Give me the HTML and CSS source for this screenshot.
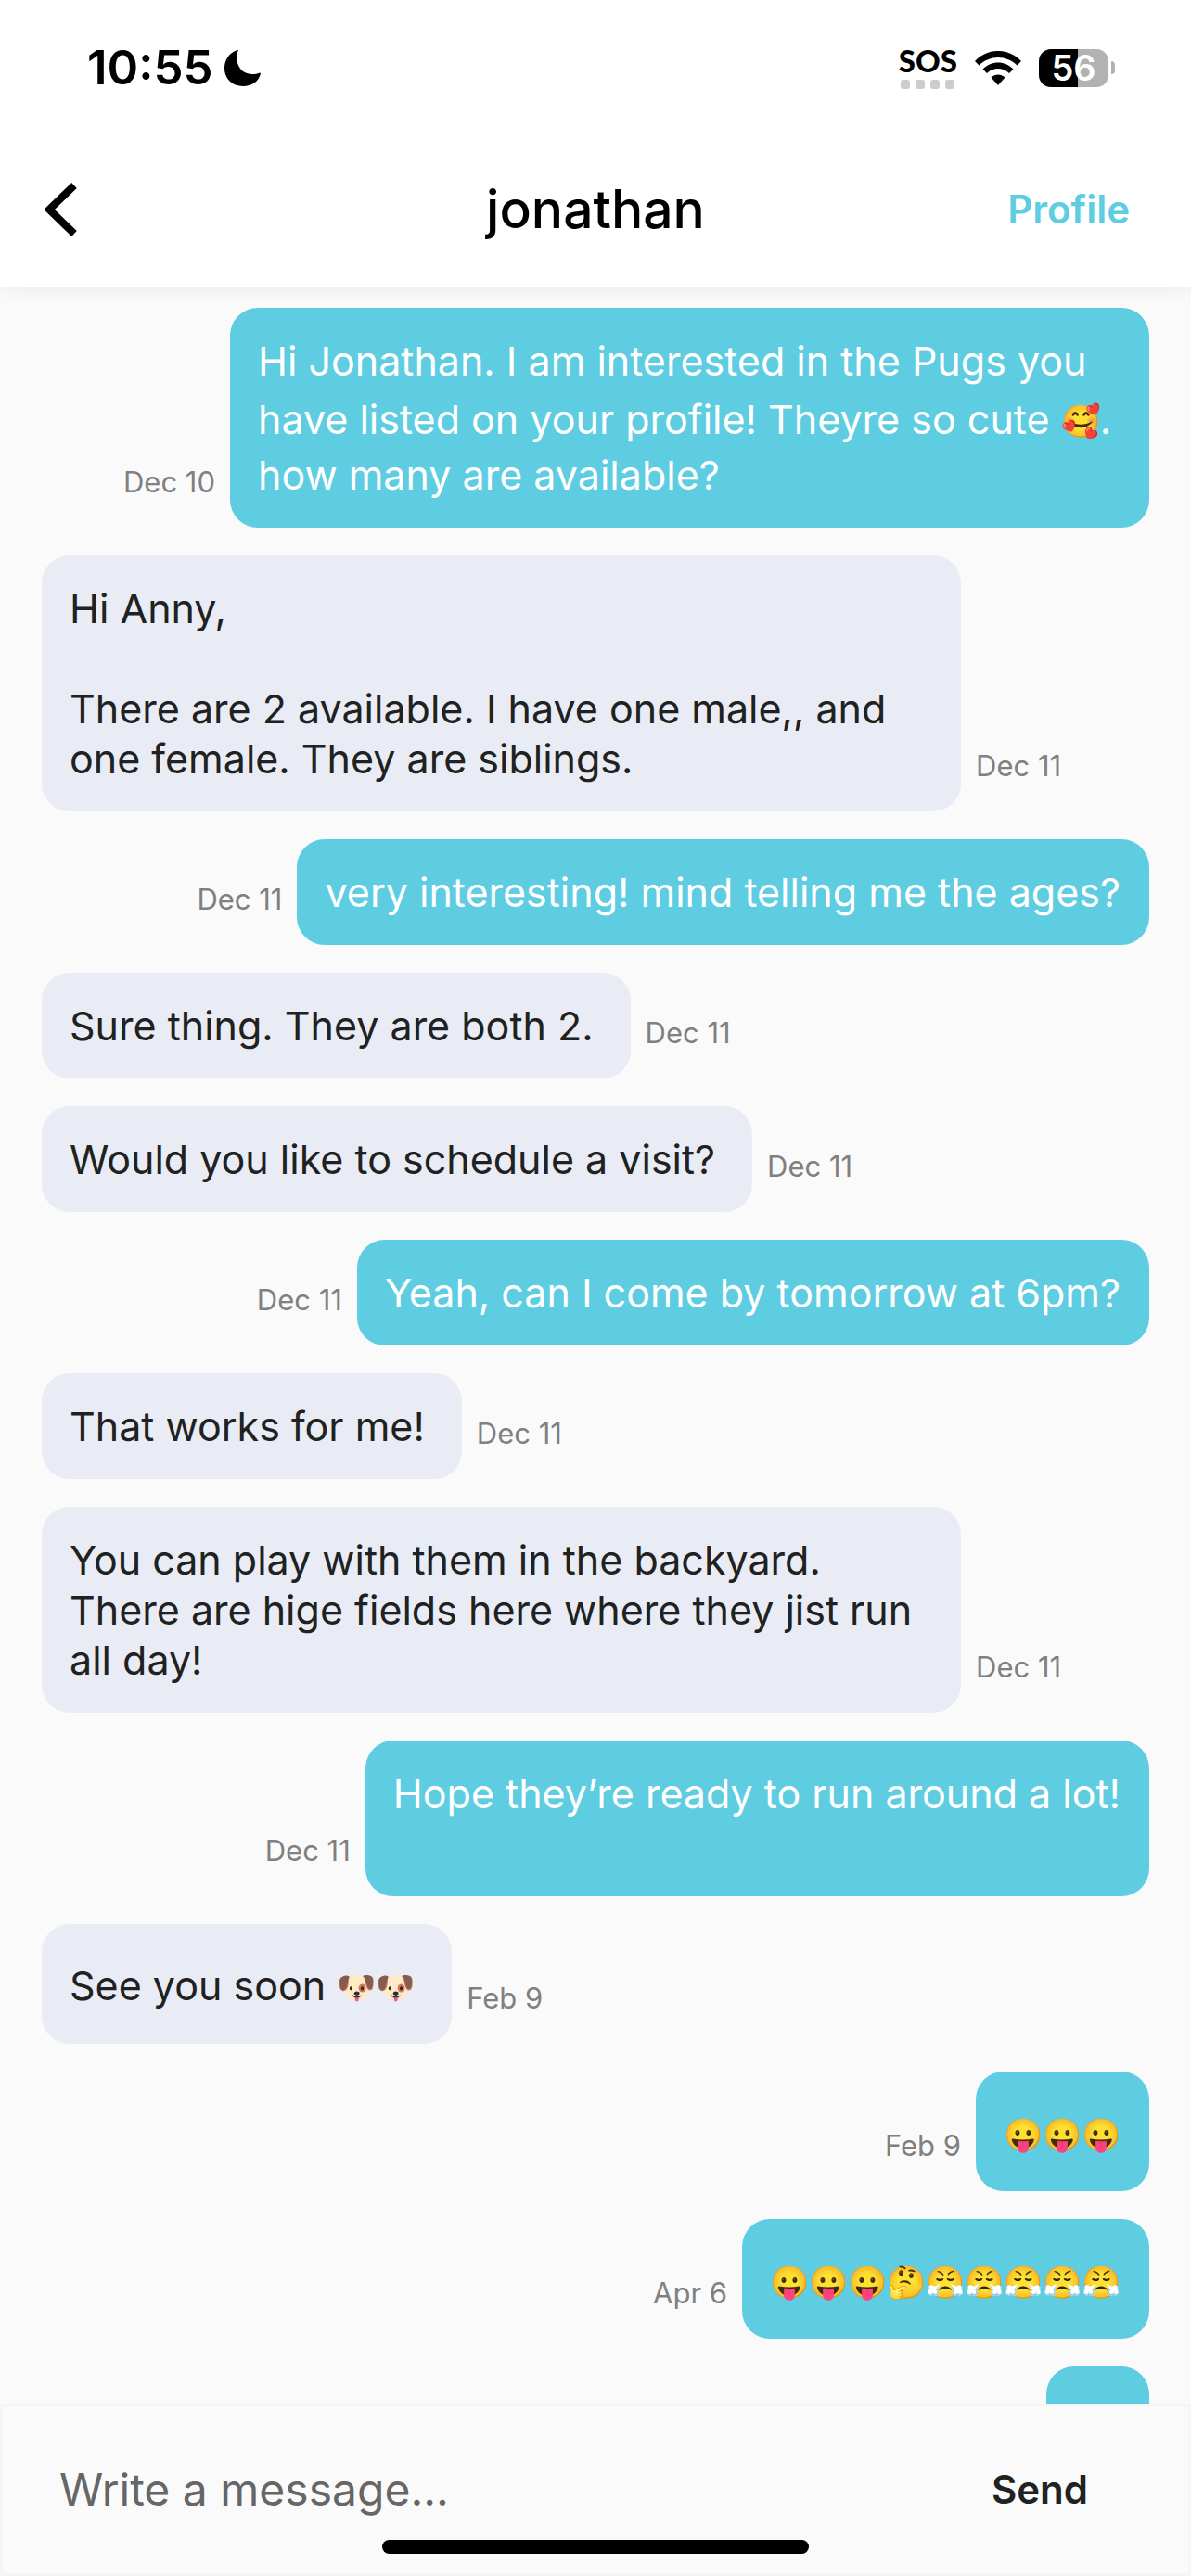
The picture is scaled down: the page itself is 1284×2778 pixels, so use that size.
FILE: index.html
```html
<!DOCTYPE html>
<html lang="en">
<head>
<meta charset="utf-8">
<meta name="viewport" content="width=device-width, initial-scale=1">
<title>jonathan</title>
<link rel="stylesheet" href="styles.css">
</head>
<body>
<div class="screen">
  <header class="top">
    <div class="status">
      <div class="status-left">
        <span class="clock">10:55</span>
        <svg class="moon" viewBox="0 0 39 39" aria-hidden="true"><path d="M15 0C13 4 12.500 8 13.500 12C15.500 21 22 26 30 26C33 26 35.500 25.500 38 24.500C38.800 24.500 39 25 38.800 26C36.500 34 29.500 39 20 39C8.500 39 0 31 0 19.500C0 10.500 5 3 14 0C14.700 -.2 15.100 -.2 15 0Z"/></svg>
      </div>
      <div class="status-right">
        <div class="carrier">
          <span class="sos">SOS</span>
          <span class="dots"><i></i><i></i><i></i><i></i></span>
        </div>
        <svg class="wifi" viewBox="0 0 50 37" aria-hidden="true">
          <path d="M0 11C14 -3.700 36 -3.700 50 11L45.500 15.500C34 4 16 4 4.500 15.500Z"/>
          <path d="M8.500 19.500C18 10 32 10 41.500 19.500L37 24C30 17.300 20 17.300 13 24Z"/>
          <path d="M17.500 28.500C22 24.500 28 24.500 32.500 28.500L25 37Z"/>
        </svg>
        <div class="battery"><span class="level">56</span><span class="nub"></span></div>
      </div>
    </div>
    <nav class="nav">
      <button class="back" type="button" aria-label="Back"><svg viewBox="0 0 34 58" aria-hidden="true"><path d="M31 3L4 29L31 55"/></svg></button>
      <h1 class="name">jonathan</h1>
      <a class="profile" href="#profile">Profile</a>
    </nav>
  </header>

  <main class="thread">
    <div class="row sent"><p class="bubble">Hi Jonathan. I am interested in the Pugs you have listed on your profile! Theyre so cute <span class="emoji">🥰</span>. how many are available?</p><time>Dec 10</time></div>
    <div class="row"><p class="bubble">Hi Anny,<br><br>There are 2 available. I have one male,, and one female. They are siblings.</p><time>Dec 11</time></div>
    <div class="row sent"><p class="bubble">very interesting! mind telling me the ages?</p><time>Dec 11</time></div>
    <div class="row"><p class="bubble">Sure thing. They are both 2.</p><time>Dec 11</time></div>
    <div class="row"><p class="bubble">Would you like to schedule a visit?</p><time>Dec 11</time></div>
    <div class="row sent"><p class="bubble">Yeah, can I come by tomorrow at 6pm?</p><time>Dec 11</time></div>
    <div class="row"><p class="bubble">That works for me!</p><time>Dec 11</time></div>
    <div class="row"><p class="bubble">You can play with them in the backyard. There are hige fields here where they jist run all day!</p><time>Dec 11</time></div>
    <div class="row sent"><p class="bubble">Hope they’re ready to run around a lot!<br><br></p><time>Dec 11</time></div>
    <div class="row"><p class="bubble">See you soon <span class="emoji">🐶🐶</span></p><time>Feb 9</time></div>
    <div class="row sent"><p class="bubble"><span class="emoji">😛😛😛</span></p><time>Feb 9</time></div>
    <div class="row sent"><p class="bubble"><span class="emoji">😛😛😛🤔😤😤😤😤😤</span></p><time>Apr 6</time></div>
    <div class="row sent"><p class="bubble"></p></div>
  </main>

  <form class="composer">
    <input class="field" type="text" placeholder="Write a message..." aria-label="Write a message">
    <button class="send" type="button">Send</button>
    <span class="home"></span>
  </form>
</div>
</body>
</html>
```
FILE: styles.css
```css
* { box-sizing: border-box; }

body {
  margin: 0;
  background: #fafafa;
  color: #202121;
  font-family: Inter, "Noto Sans", sans-serif;
}

.screen {
  display: flex;
  flex-direction: column;
  height: 100vh;
}

/* Header */
.top {
  position: relative;
  flex: none;
  background: #fff;
  color: #000;
  box-shadow: 0 0 24px rgba(0, 0, 0, 0.08);
}

.status {
  display: flex;
  justify-content: space-between;
  align-items: center;
  height: 144px;
  padding: 2px 82px 0 94px;
}

.status-left,
.status-right { display: flex; align-items: center; }

.status-left { gap: 12px; }
.status-right { gap: 19px; }

.clock { font-size: 51px; font-weight: 600; line-height: 60px; }
.moon { width: 39px; height: 39px; }

.carrier {
  display: flex;
  flex-direction: column;
  align-items: center;
  gap: 6px;
}

.sos { font: 900 33px/30px Lato, sans-serif; }

.dots { display: flex; gap: 6px; }
.dots i { width: 10px; height: 10px; border-radius: 3px; background: #ccc; }

.wifi { width: 50px; height: 37px; }

.battery { display: flex; align-items: center; gap: 3px; }

.level {
  width: 75px;
  height: 41px;
  border-radius: 13px;
  background: linear-gradient(90deg, #000 56%, #b2b2b2 56%);
  color: #fff;
  font-size: 38px;
  font-weight: 600;
  line-height: 41px;
  text-align: center;
}

.nub { width: 4px; height: 14px; border-radius: 0 4px 4px 0; background: #b2b2b2; }

.nav {
  display: grid;
  grid-template-columns: 1fr auto 1fr;
  align-items: center;
  height: 165px;
  padding: 0 66px 2px;
}

.back {
  justify-self: start;
  display: flex;
  margin-left: -18px;
  padding: 0;
  border: 0;
  background: none;
}

.back svg {
  width: 36px;
  height: 58px;
  fill: none;
  stroke: #000;
  stroke-width: 8;
}

.name { margin: 0; font-size: 57px; font-weight: 500; line-height: 66px; }

.profile {
  justify-self: end;
  color: #5ecce1;
  font-size: 42px;
  font-weight: 600;
  line-height: 54px;
  text-decoration: none;
}

/* Conversation */
.thread {
  flex: 1;
  display: flex;
  flex-direction: column;
  gap: 30px;
  min-height: 0;
  padding: 23px 45px 0;
  overflow: hidden;
}

.row {
  display: flex;
  flex: none;
  align-items: flex-end;
  gap: 16px;
}

.row.sent { flex-direction: row-reverse; }

.bubble {
  max-width: 83%;
  min-width: 111px;
  min-height: 114px;
  margin: 0;
  padding: 30px 40px 30px 30px;
  border-radius: 30px;
  background: #e9ecf4;
  font-size: 43px;
  line-height: 54px;
}

.sent .bubble {
  padding-right: 31px;
  background: #5ecce1;
  color: #fff;
}

/* Emoji sit in a taller line than plain text */
.emoji {
  display: inline-block;
  height: 69px;
  overflow: hidden;
  font-size: 34px;
  line-height: 76px;
  vertical-align: -17px;
}

time {
  padding-bottom: 30px;
  color: #808080;
  font-size: 31px;
  line-height: 38px;
}

/* Message box */
.composer {
  position: relative;
  flex: none;
  display: flex;
  align-items: center;
  height: 186px;
  padding: 0 108px 0 61px;
  border: 3px solid #f5f5f5;
}

.field {
  flex: 1;
  min-width: 0;
  padding: 0;
  border: 0;
  outline: 0;
  background: none;
  color: #202121;
  font: 400 48px/60px Inter, "Noto Sans", sans-serif;
}

.field::placeholder { color: #666; opacity: 1; }

.send {
  padding: 0;
  border: 0;
  background: none;
  color: #202121;
  font: 600 42px/54px Inter, "Noto Sans", sans-serif;
}

.home {
  position: absolute;
  bottom: 21px;
  left: 50%;
  width: 460px;
  height: 15px;
  margin-left: -230px;
  border-radius: 8px;
  background: #000;
}
```
